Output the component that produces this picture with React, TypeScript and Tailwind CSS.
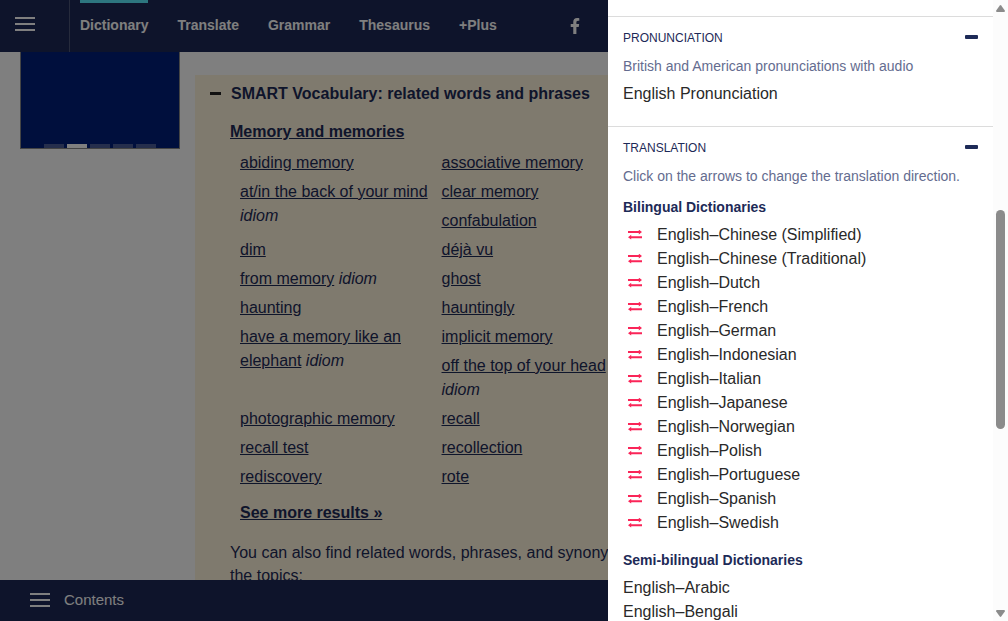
import { FaFacebookF } from "react-icons/fa";

type Word = { text: string; idiom?: boolean; size?: string };

const leftWords: Word[] = [
  { text: "abiding memory" },
  { text: "at/in the back of your mind", idiom: true, size: "min-h-[58px]" },
  { text: "dim" },
  { text: "from memory", idiom: true },
  { text: "haunting" },
  { text: "have a memory like an elephant", idiom: true, size: "min-h-[82px]" },
  { text: "photographic memory" },
  { text: "recall test" },
  { text: "rediscovery" },
];

const rightWords: Word[] = [
  { text: "associative memory" },
  { text: "clear memory" },
  { text: "confabulation" },
  { text: "déjà vu" },
  { text: "ghost" },
  { text: "hauntingly" },
  { text: "implicit memory" },
  { text: "off the top of your head", idiom: true },
  { text: "recall" },
  { text: "recollection" },
  { text: "rote" },
];

const bilingual = [
  "Chinese (Simplified)",
  "Chinese (Traditional)",
  "Dutch",
  "French",
  "German",
  "Indonesian",
  "Italian",
  "Japanese",
  "Norwegian",
  "Polish",
  "Portuguese",
  "Spanish",
  "Swedish",
];

const navItems = ["Dictionary", "Translate", "Grammar", "Thesaurus", "+Plus"];

function Bars() {
  return (
    <span className="flex w-5 flex-col gap-1">
      <span className="h-0.5 bg-white" />
      <span className="h-0.5 bg-white" />
      <span className="h-0.5 bg-white" />
    </span>
  );
}

function SwapIcon() {
  return (
    <svg width="14" height="10" viewBox="0 0 14 10" fill="#fa2558" aria-hidden="true">
      <path d="M0 1h10.800V-.4L14 2 10.800 4.400V3H0z" />
      <path d="M14 6.200H3.200V4.800L0 7.200l3.200 2.400V8.200H14z" />
    </svg>
  );
}

function WordList({ words }: { words: Word[] }) {
  return (
    <ul className="flex-1">
      {words.map((w) => (
        <li key={w.text} className={`pr-2 pb-[5px] leading-6 ${w.size ?? ""}`}>
          <a href="#" className="underline underline-offset-1">
            {w.text}
          </a>
          {w.idiom && <i> idiom</i>}
        </li>
      ))}
    </ul>
  );
}

function SectionTitle({ children }: { children: string }) {
  return (
    <h2 className="text-xs leading-5 text-[#1d2a57]">
      <button className="flex w-full items-center justify-between pr-[15px]" aria-expanded="true">
        <span className="pt-px">{children}</span>
        <span className="mb-0.5 h-1 w-[13px] rounded-[1px] bg-[#1d2a57]" />
      </button>
    </h2>
  );
}

function Page() {
  return (
    <div className="flex h-full flex-col bg-white text-[#1d2a57]">
      <header className="flex h-[52px] shrink-0 items-stretch bg-[#1d2957] text-white">
        <button aria-label="Open menu" className="flex w-[70px] items-center border-r border-[#4d5678] pb-1 pl-[15px]">
          <Bars />
        </button>
        <nav className="flex gap-[29px] pl-[10px] text-sm font-bold">
          {navItems.map((n, i) => (
            <a
              key={n}
              href="#"
              className={`flex items-center border-t-3 pb-1.5 ${i === 0 ? "border-[#5aecfe]" : "border-transparent"}`}
            >
              {n}
            </a>
          ))}
        </nav>
        <a href="#" aria-label="Facebook" className="ml-[70px] flex items-center pb-px">
          <FaFacebookF size={16} />
        </a>
      </header>

      <div className="flex min-h-0 flex-1 overflow-hidden">
        <aside className="ml-5 flex h-[97px] w-40 shrink-0 items-end justify-center gap-[3px] border border-t-0 border-[#888888] bg-[#001f7a]">
          <span className="h-1 w-5 bg-[#4a5c98]" />
          <span className="h-1 w-5 bg-white" />
          <span className="h-1 w-5 bg-[#4a5c98]" />
          <span className="h-1 w-5 bg-[#4a5c98]" />
          <span className="h-1 w-5 bg-[#4a5c98]" />
        </aside>
        <main className="mt-[23px] ml-[15px] w-[488px] shrink-0 bg-[#fff5dd] pt-[7px] pr-5 pl-[35px]">
          <h2 className="-ml-5 font-bold leading-6">
            <button className="flex items-center gap-[10px]" aria-expanded="true">
              <span className="mb-0.5 h-[3px] w-[11px] bg-[#222222]" />
              <span>SMART Vocabulary: related words and phrases</span>
            </button>
          </h2>
          <h3 className="mt-3.5 font-bold leading-6">
            <a href="#" className="underline underline-offset-1">
              Memory and memories
            </a>
          </h3>
          <div className="mt-[7px] flex w-[413px] pl-[10px]">
            <WordList words={leftWords} />
            <WordList words={rightWords} />
          </div>
          <p className="mt-[7px] pl-[10px] font-bold leading-6">
            <a href="#" className="underline underline-offset-1">
              See more results »
            </a>
          </p>
          <p className="mt-4 leading-[23px]">
            You can also find related words, phrases, and synonyms in the topics:
          </p>
        </main>
      </div>

      <footer className="flex h-[41px] shrink-0 items-center bg-[#1d2957] pb-px pl-[30px] text-[15px] leading-6 text-white">
        <button className="flex items-center gap-3.5">
          <Bars />
          <span>Contents</span>
        </button>
      </footer>
    </div>
  );
}

function Drawer() {
  return (
    <div className="absolute inset-y-0 right-0 flex w-[400px] bg-white">
      <div className="flex-1 overflow-hidden pt-4 text-[#292929]">
        <section className="border-t border-[#dcdcdc] pt-[10px] pb-5 pl-[15px]">
          <SectionTitle>PRONUNCIATION</SectionTitle>
          <p className="mt-2 text-sm leading-5 text-[#646c8f]">
            British and American pronunciations with audio
          </p>
          <a href="#" className="mt-1.5 block leading-6">
            English Pronunciation
          </a>
        </section>
        <section className="border-t border-[#dcdcdc] pt-[10px] pl-[15px]">
          <SectionTitle>TRANSLATION</SectionTitle>
          <p className="mt-2 text-sm leading-5 text-[#646c8f]">
            Click on the arrows to change the translation direction.
          </p>
          <h3 className="mt-[11px] text-sm font-bold leading-5 text-[#1d2a57]">Bilingual Dictionaries</h3>
          <ul className="mt-1.5 pl-[5px]">
            {bilingual.map((name) => (
              <li key={name} className="flex items-center gap-[15px] leading-6">
                <button aria-label={`Switch direction: ${name}`}>
                  <SwapIcon />
                </button>
                <a href="#">English–{name}</a>
              </li>
            ))}
          </ul>
          <h3 className="mt-[15px] text-sm font-bold leading-5 text-[#1d2a57]">Semi-bilingual Dictionaries</h3>
          <ul className="mt-1.5 leading-6">
            <li>
              <a href="#">English–Arabic</a>
            </li>
            <li>
              <a href="#">English–Bengali</a>
            </li>
          </ul>
        </section>
      </div>
      <div className="flex w-[15px] flex-col items-center bg-[#fcfcfc] pt-[5px] pb-1" aria-hidden="true">
        <svg width="9" height="7" viewBox="0 0 9 7" fill="#8b8b8b">
          <path d="M3.8.5q.7-.8 1.4 0L8.8 5.6Q9.200 7 8 7H1Q-.2 7 .2 5.600z" />
        </svg>
        <div className="mt-[198px] h-[219px] w-[9px] rounded-full bg-[#8b8b8b]" />
        <svg className="mt-auto" width="9" height="7" viewBox="0 0 9 7" fill="#8b8b8b">
          <path d="M3.800 6.500q.7.8 1.400 0L8.800 1.400Q9.200 0 8 0H1Q-.2 0 .2 1.400z" />
        </svg>
      </div>
    </div>
  );
}

export default function App() {
  return (
    <div className="relative h-screen overflow-hidden font-['Liberation_Sans',Arial,sans-serif] text-base">
      <Page />
      <div className="absolute inset-0 bg-black/50" />
      <Drawer />
    </div>
  );
}
